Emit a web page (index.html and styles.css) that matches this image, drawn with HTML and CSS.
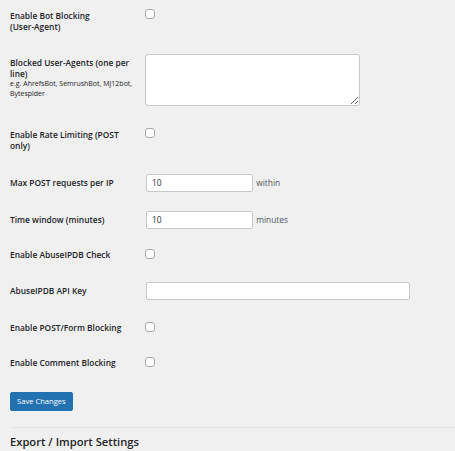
FILE: index.html
```html
<!DOCTYPE html>
<html lang="en">
<head>
<meta charset="utf-8">
<title>Settings</title>
<link rel="stylesheet" href="styles.css">
</head>
<body>
<div class="wrap">
  <form class="settings-form">
    <table class="form-table">
      <tbody>
        <tr class="row-tall-2">
          <th scope="row">Enable Bot Blocking <span class="nowrap">(User-Agent)</span></th>
          <td class="cell-check"><input type="checkbox" class="check"></td>
        </tr>
        <tr>
          <th scope="row">Blocked User-Agents (one per line)
            <p class="hint">e.g. AhrefsBot, SemrushBot, MJ12bot, Bytespider</p>
          </th>
          <td class="cell-area"><textarea class="area" rows="4"></textarea></td>
        </tr>
        <tr class="row-tall-3">
          <th scope="row">Enable Rate Limiting (POST only)</th>
          <td class="cell-check"><input type="checkbox" class="check"></td>
        </tr>
        <tr class="row-r4">
          <th scope="row">Max POST requests per IP</th>
          <td class="cell-input"><input type="text" class="small-text" value="10"> <span class="unit">within</span></td>
        </tr>
        <tr class="row-r5">
          <th scope="row">Time window (minutes)</th>
          <td class="cell-input"><input type="text" class="small-text" value="10"> <span class="unit">minutes</span></td>
        </tr>
        <tr class="row-r6">
          <th scope="row">Enable AbuseIPDB Check</th>
          <td class="cell-check"><input type="checkbox" class="check"></td>
        </tr>
        <tr class="row-r7">
          <th scope="row">AbuseIPDB API Key</th>
          <td class="cell-input"><input type="text" class="regular-text" value=""></td>
        </tr>
        <tr class="row-r8">
          <th scope="row">Enable POST/Form Blocking</th>
          <td class="cell-check"><input type="checkbox" class="check"></td>
        </tr>
        <tr class="row-r9">
          <th scope="row">Enable Comment Blocking</th>
          <td class="cell-check"><input type="checkbox" class="check"></td>
        </tr>
      </tbody>
    </table>
    <p class="submit"><button type="button" class="button-primary">Save Changes</button></p>
  </form>
  <hr class="divider">
  <h2 class="section-title">Export / Import Settings</h2>
</div>
</body>
</html>
```
FILE: styles.css
```css
html, body {
  margin: 0;
  padding: 0;
}
body {
  background: #f0f0f1;
  color: #1d2327;
  font-family: "Open Sans", "Noto Sans", "Liberation Sans", sans-serif;
  font-size: 8.4px;
  line-height: 11px;
  overflow: hidden;
}
.wrap {
  padding-left: 10px;
}
.settings-form {
  margin: 0;
}
.nowrap {
  white-space: nowrap;
}
.form-table {
  border-collapse: collapse;
  border-spacing: 0;
}
.form-table th {
  width: 123px;
  padding: 9.5px 6px 15.5px 0;
  text-align: left;
  vertical-align: top;
  font-weight: 600;
  line-height: 11px;
}
.form-table td {
  vertical-align: top;
  padding: 0 0 0 6px;
}
.cell-check {
  padding-top: 9px !important;
}
.cell-input {
  padding-top: 6.5px !important;
}
.cell-area {
  padding-top: 6.5px !important;
  padding-bottom: 13.5px !important;
}
.row-tall-3 th {
  padding-bottom: 17px;
}
.row-r4 th {
  padding-bottom: 16.5px;
}
.row-r5 th {
  padding-bottom: 14.5px;
}
.row-r7 th {
  padding-bottom: 16.5px;
}
.row-r8 th {
  padding-bottom: 14.5px;
}
.hint {
  margin: 0;
  font-weight: 400;
  font-size: 7px;
  line-height: 10.8px;
}
.check {
  -webkit-appearance: none;
  appearance: none;
  display: block;
  box-sizing: border-box;
  width: 10px;
  height: 10px;
  margin: 0;
  background: #fff;
  border: 1px solid #a7aaad;
  border-radius: 3px;
}
.area {
  display: block;
  box-sizing: border-box;
  width: 215px;
  height: 52px;
  margin: 0;
  background: #fff;
  border: 1px solid #c7c8ca;
  border-radius: 3px;
  font: inherit;
  resize: both;
}
.small-text,
.regular-text {
  box-sizing: border-box;
  height: 17.5px;
  margin: 0 1px;
  padding: 0 5px;
  background: #fff;
  border: 1px solid #c7c8ca;
  border-radius: 2px;
  font-family: inherit;
  font-size: 8.4px;
  color: #2c3338;
  vertical-align: top;
  outline: none;
}
.small-text {
  width: 107px;
}
.regular-text {
  width: 264px;
}
.unit {
  display: inline-block;
  line-height: 17.5px;
  color: #50575e;
  vertical-align: top;
}
.submit {
  margin: 8.5px 0 0 0;
  padding: 0;
}
.button-primary {
  display: inline-block;
  height: 19px;
  padding: 0 6px;
  margin: 0;
  background: #2271b1;
  color: #fff;
  border: 1px solid #2271b1;
  border-radius: 2px;
  font-family: inherit;
  font-size: 7.6px;
  line-height: 17px;
  cursor: pointer;
}
.divider {
  margin: 15.5px 0 0 2px;
  border: 0;
  border-top: 1px solid #e2e2e4;
  height: 0;
}
.section-title {
  margin: 7px 0 0 0;
  font-size: 11.2px;
  line-height: 14px;
  font-weight: 600;
  color: #1d2327;
}
```
